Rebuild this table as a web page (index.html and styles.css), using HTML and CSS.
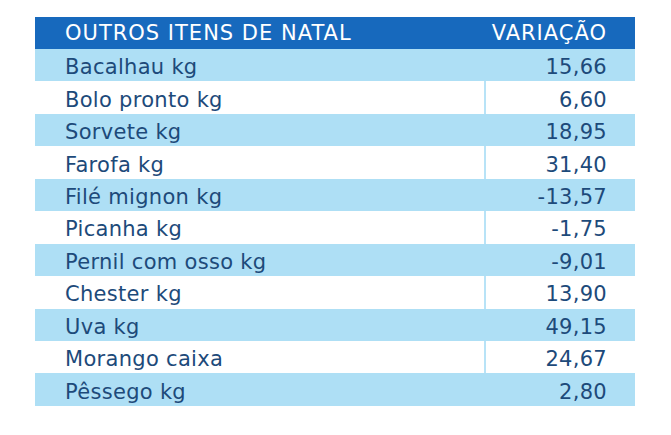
FILE: index.html
```html
<!DOCTYPE html>
<html lang="pt">
<head>
<meta charset="utf-8">
<link rel="stylesheet" href="styles.css">
</head>
<body>
<table class="price-table">
  <thead>
    <tr class="head"><th class="name">OUTROS ITENS DE NATAL</th><th class="val">VARIAÇÃO</th></tr>
  </thead>
  <tbody>
    <tr class="blue"><td class="name">Bacalhau kg</td><td class="val">15,66</td></tr>
    <tr class="white"><td class="name">Bolo pronto kg</td><td class="val">6,60</td></tr>
    <tr class="blue"><td class="name">Sorvete kg</td><td class="val">18,95</td></tr>
    <tr class="white"><td class="name">Farofa kg</td><td class="val">31,40</td></tr>
    <tr class="blue"><td class="name">Filé mignon kg</td><td class="val">-13,57</td></tr>
    <tr class="white"><td class="name">Picanha kg</td><td class="val">-1,75</td></tr>
    <tr class="blue"><td class="name">Pernil com osso kg</td><td class="val">-9,01</td></tr>
    <tr class="white"><td class="name">Chester kg</td><td class="val">13,90</td></tr>
    <tr class="blue"><td class="name">Uva kg</td><td class="val">49,15</td></tr>
    <tr class="white"><td class="name">Morango caixa</td><td class="val">24,67</td></tr>
    <tr class="blue"><td class="name">Pêssego kg</td><td class="val">2,80</td></tr>
  </tbody>
</table>
</body>
</html>
```
FILE: styles.css
```css
html, body {
  margin: 0;
  padding: 0;
  background: #ffffff;
}
body {
  padding: 17px 0 0 35px;
}
.price-table {
  width: 600px;
  border-collapse: collapse;
  border-spacing: 0;
  font-family: "DejaVu Sans", "Open Sans", sans-serif;
  table-layout: fixed;
}
.price-table th,
.price-table td {
  box-sizing: border-box;
  padding: 0;
  font-size: 21px;
  line-height: 24px;
  letter-spacing: 0.3px;
}
.head th {
  background: #1769bd;
  color: #ffffff;
  font-weight: normal;
  height: 32px;
  font-size: 21px;
  letter-spacing: 1px;
}
.price-table .name {
  text-align: left;
  padding-left: 30px;
}
.price-table .val {
  width: 150px;
  text-align: right;
  padding-right: 28px;
}
.price-table tbody td {
  height: 32.45px;
  padding-top: 4px;
  color: #1d4a7a;
}
.blue td {
  background: #aedff5;
}
.white td {
  background: #ffffff;
}
.white td.val {
  border-left: 2px solid #b8e3f7;
}
```
